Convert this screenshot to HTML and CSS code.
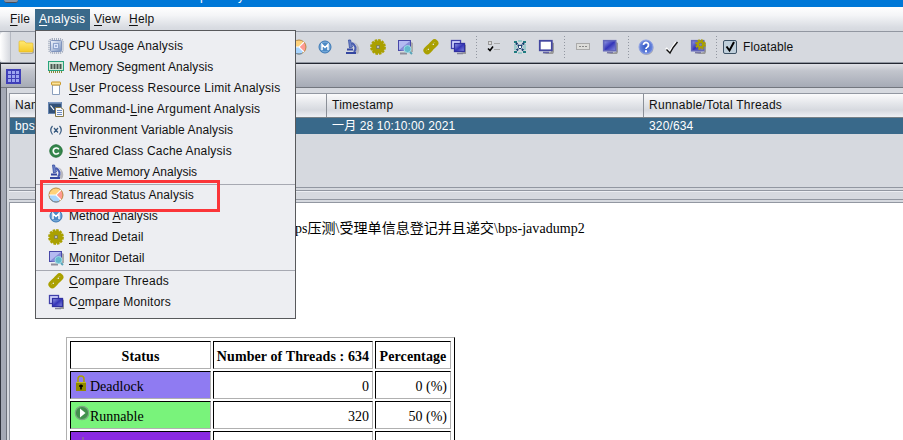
FILE: index.html
```html
<!DOCTYPE html>
<html lang="zh">
<head>
<meta charset="utf-8">
<title>Thread Analyzer</title>
<link rel="stylesheet" href="styles.css">
</head>
<body>
<svg class="defs" width="0" height="0">
  <defs>
    <linearGradient id="blue" x1="0" y1="0" x2="1" y2="1"><stop offset="0" stop-color="#9aa2e8"/><stop offset=".5" stop-color="#3434b8"/><stop offset="1" stop-color="#8a90e0"/></linearGradient>
    <linearGradient id="gold" x1="0" y1="0" x2="0" y2="1"><stop offset="0" stop-color="#ffe873"/><stop offset="1" stop-color="#f5ca28"/></linearGradient>
    <linearGradient id="chip" x1="0" y1="0" x2="1" y2="1"><stop offset="0" stop-color="#f4f7ff"/><stop offset="1" stop-color="#7791bd"/></linearGradient>
    <radialGradient id="ball"><stop offset="0" stop-color="#2d55c4"/><stop offset="1" stop-color="#708be0"/></radialGradient>
    <symbol id="folder" viewBox="0 0 16 16"><path d="M2 14h12l2-7v7l-2 1H3z" fill="#a8a8a8"/><path d="M1 3q0-1 1-1h4l2 2h6q1 0 1 1v7q0 1-1 1H2q-1 0-1-1z" fill="url(#gold)" stroke="#e3b71f" stroke-width=".6"/></symbol>
    <symbol id="cpu" viewBox="0 0 16 16"><rect x="1" y="1" width="14" height="14" rx="3" fill="none" stroke="#8d99ae" stroke-width="1.4" stroke-dasharray="1 1"/><rect x="2.500" y="2.500" width="11" height="11" rx="1" fill="url(#chip)" stroke="#8094bd"/><rect x="5.500" y="5.500" width="5" height="5" fill="#dce6fa" stroke="#8ea3cc"/><rect x="7" y="7" width="2" height="2" fill="#9fb0d6"/></symbol>
    <symbol id="ram" viewBox="0 0 16 16"><rect x=".5" y="2.500" width="15" height="9" fill="#d2e8d8" stroke="#27a47c"/><path d="M3.500 5v5M6.500 5v5M9.500 5v5M12.500 5v5" stroke="#4a5750" stroke-width="2"/><path d="M1 13h14" stroke="#898b3c" stroke-width="2" stroke-dasharray="1 1"/></symbol>
    <symbol id="jar" viewBox="0 0 16 16"><path d="M4.500 5h7v9.500h-7z" fill="#fff" stroke="#8b9fbd"/><rect x="3.500" y="2" width="9" height="3" rx=".6" fill="#fbe39a" stroke="#c89728"/></symbol>
    <symbol id="console" viewBox="0 0 16 16"><rect x=".5" y="1.500" width="13" height="11" fill="#315078" stroke="#6684b0"/><path d="M1 2h12" stroke="#94aed8"/><path d="M2.500 4.500 6 9M7 9h2" stroke="#fff" stroke-width="1.200"/><path d="M7.500 6.500h5l3 2v7h-8z" fill="#f8f9ff" stroke="#887b4b"/><path d="M9 9.500h5M9 11.500h5M9 13.500h5" stroke="#6e8dc0"/></symbol>
    <symbol id="variable" viewBox="0 0 16 16"><path d="M4.500 4Q1 8 4.500 12.500M11.500 4q3.500 4 0 8.500M6 6l4 4.500M10 6l-4 4.500" fill="none" stroke="#34577d" stroke-width="1.200"/></symbol>
    <symbol id="cache" viewBox="0 0 16 16"><circle cx="8" cy="8" r="6.200" fill="#35864c" stroke="#237139"/><path d="M10.800 6.400A3 3 0 1 0 10.800 9.600" fill="none" stroke="#fff" stroke-width="1.700"/></symbol>
    <symbol id="scope" viewBox="0 0 16 16"><path d="M10 3q6 6 0 11l4 1q3-5-1-10z" fill="#b8b8be"/><path d="M4.500 1h2l2 7-3 1z" fill="#6f83c8" stroke="#334ba0" stroke-width=".8"/><path d="M8 4q6 4 2 9" fill="none" stroke="#4a5cb0" stroke-width="2.200"/><path d="M3 10.500h6M2 14h10" stroke="#3547a0" stroke-width="1.800"/></symbol>
    <symbol id="pie" viewBox="0 0 16 16"><circle cx="8" cy="8" r="7" fill="#ffd27b"/><path d="M1 8h7l5 5A7 7 0 0 1 1 8" fill="#a8d5ff"/><path d="M8 8l5-5a7 7 0 0 1 0 10z" fill="#ff9a91"/><circle cx="8" cy="8" r="7" fill="none" stroke="#b88a45"/><path d="M1 8h7l5-5M8 8l5 5" stroke="#f9fcff" stroke-width="1.100" fill="none"/><path d="M2 11.500a7 7 0 0 0 9 3" stroke="#648fbd" fill="none"/></symbol>
    <symbol id="method" viewBox="0 0 16 16"><circle cx="8" cy="8" r="6" fill="#4c8ac5" stroke="#3b78b5"/><circle cx="8" cy="8" r="4.900" fill="none" stroke="#93bfe5" stroke-width=".7"/><path d="M5 11V5.500l3 3 3-3V11" fill="none" stroke="#fff" stroke-width="1.500"/></symbol>
    <symbol id="gear" viewBox="0 0 16 16"><circle cx="8" cy="8" r="6.900" fill="none" stroke="#aaa000" stroke-width="2" stroke-dasharray="2.600 1.012"/><circle cx="8" cy="8" r="6.600" fill="#aaa000"/><rect x="6" y="6" width="4" height="4" fill="#85864a"/><rect x="7" y="7" width="2" height="2" fill="#b8bbb8"/></symbol>
    <symbol id="smallgear" viewBox="0 0 12 12"><circle cx="6" cy="6" r="4.800" fill="none" stroke="#aaa000" stroke-width="2" stroke-dasharray="2.270 1.500"/><circle cx="6" cy="6" r="3" fill="none" stroke="#aaa000" stroke-width="2.600"/><circle cx="6" cy="6" r="1.500" fill="#8a8c9c"/></symbol>
    <symbol id="search" viewBox="0 0 16 16"><path d="M3 13h13V4l-2-1v10z" fill="#aaa"/><rect x="1.500" y="1.500" width="12" height="10" fill="#b4baf1" stroke="#4848a8"/><path d="M2 11l11-9v4l-6 6z" fill="#858bd8"/><path d="M3 14.500h7" stroke="#8e8e9a" stroke-width="2"/><circle cx="10.500" cy="10" r="3.500" fill="#64b9cc" stroke="#9adbe5"/><path d="m13 13 2 2" stroke="#57a4b8" stroke-width="2"/></symbol>
    <symbol id="link" viewBox="0 0 16 16"><g fill="none" stroke="#aaa000" stroke-width="3"><rect x="1.700" y="8" width="8" height="4.600" rx="2.200" transform="rotate(-45 5.500 10.500)"/><rect x="6.500" y="3" width="8" height="4.600" rx="2.200" transform="rotate(-45 10.500 5.500)"/></g><path d="m4 13 9-9" stroke="#aaa000" stroke-width="3"/><path d="m5 11 1-1M10 6l1-1" stroke="#e7e9d8"/></symbol>
    <symbol id="monitors" viewBox="0 0 16 16"><path d="M7 15h9V6l-2-1v8z" fill="#999"/><rect x="1.500" y="1.500" width="9" height="8" fill="#d6d9ff" stroke="#4141aa" stroke-width="1.300"/><rect x="4.500" y="4.500" width="10" height="8" fill="url(#blue)" stroke="#3030a0" stroke-width="1.300"/><path d="M7 14.500h6" stroke="#828299" stroke-width="1.500"/></symbol>
    <symbol id="checks" viewBox="0 0 16 16"><rect x="2.500" y="2.500" width="3" height="3" fill="#ddd" stroke="#999"/><path d="M8 4.500h6M8 10.500h6" stroke="#aaa" stroke-width="1.200"/><path d="m2 9.500 2 2 3-4" fill="none" stroke="#000" stroke-width="1.600"/></symbol>
    <symbol id="expand" viewBox="0 0 16 16"><path d="M2 2h3v2H2zM11 2h3v2h-3zM2 12h3v2H2zM11 12h3v2h-3z" fill="#207c80"/><path d="M6 2h4M2 8h3M11 8h3M6 14h4M2 6h2M12 6h2M2 10h2M12 10h2" stroke="#8ac5c5" stroke-width="1.500"/><path d="m4 4 8 8M12 4l-8 8" stroke="#173f70" stroke-width="2.200" stroke-dasharray="2 .8"/><path d="M7 7h2v2H7z" fill="#fff"/></symbol>
    <symbol id="screen" viewBox="0 0 16 16"><path d="M4 15h11l1-2V4l-3-1v10z" fill="#999"/><rect x="1.800" y="1.800" width="12" height="9.500" fill="#fff" stroke="#4347a0" stroke-width="1.800"/><path d="M5 13.500h6" stroke="#6262a6" stroke-width="1.500"/></symbol>
    <symbol id="dialog" viewBox="0 0 16 16"><rect x="1.500" y="4.500" width="13" height="6" fill="#ddddda" stroke="#aaa"/><path d="M4 7.500h8" stroke="#888" stroke-dasharray="2 1"/></symbol>
    <symbol id="monitor" viewBox="0 0 16 16"><path d="M4 15h11l1-2V4l-2-1v10z" fill="#999"/><rect x="1.700" y="1.700" width="12" height="10" fill="url(#blue)" stroke="#6367ba" stroke-width="1.600"/><path d="M5 13.500h6" stroke="#7777a7" stroke-width="1.500"/></symbol>
    <symbol id="help" viewBox="0 0 16 16"><circle cx="8.500" cy="9" r="7" fill="#aaa"/><circle cx="8" cy="8" r="7" fill="url(#ball)" stroke="#8da1e4"/><path d="M5.500 6a2.500 2.500 0 1 1 4 2Q8 8.700 8 10" fill="none" stroke="#fff" stroke-width="1.800"/><path d="M7 11.200h2v2H7z" fill="#fff"/></symbol>
    <symbol id="tick" viewBox="0 0 16 16"><path d="m2 9 3.500 4L12 3" fill="none" stroke="#fff" stroke-width="2.200"/><path d="m2.500 10.500 3.500 3.500Q9 8 13.500 3" fill="none" stroke="#111" stroke-width="1.400"/></symbol>
    <symbol id="lock" viewBox="0 0 16 16"><path d="M4 8V4q0-3 3-3t3 3v4" fill="none" stroke="#aaa000" stroke-width="1.500"/><path d="M2 7h10v9H2z" fill="#918a00"/><path d="M2 7.500h10" stroke="#c1b929"/><path d="M7 9.500v5M5 11h4" stroke="#000" stroke-width="1.600"/></symbol>
    <symbol id="play" viewBox="0 0 16 16"><circle cx="8" cy="8" r="6.700" fill="#42914d" stroke="#7aa881" stroke-width="1.200"/><path d="M6 3.500 11.500 8 6 12.500z" fill="#fff"/></symbol>
    <symbol id="spark" viewBox="0 0 16 16"><path d="M9 1v8M1 6h4v3M13 5 9 8" stroke="#8c8c72" fill="none"/></symbol>
  </defs>
</svg>

<div class="window">
  <div class="titlebar"><i class="app-icon"></i><span class="title-part first">p</span><span class="title-part">y</span></div>
  <nav class="menubar">
    <span class="menu menu-file"><u>F</u>ile</span><span class="menu menu-analysis"><u>A</u>nalysis</span><span class="menu menu-view"><u>V</u>iew</span><span class="menu menu-help"><u>H</u>elp</span>
  </nav>
  <div class="toolbar">
    <i class="grip"></i>
    <svg class="icon"><use href="#folder"/></svg>
    <div class="tools tools-analysis">
      <b><svg class="icon"><use href="#pie"/></svg></b><b><svg class="icon"><use href="#method"/></svg></b><b><svg class="icon"><use href="#scope"/></svg></b><b><svg class="icon"><use href="#gear"/></svg></b><b><svg class="icon"><use href="#search"/></svg></b><b><svg class="icon"><use href="#link"/></svg></b><b><svg class="icon"><use href="#monitors"/></svg></b>
    </div>
    <i class="dots"></i>
    <div class="tools"><b><svg class="icon"><use href="#checks"/></svg></b><b><svg class="icon"><use href="#expand"/></svg></b><b><svg class="icon"><use href="#screen"/></svg></b></div>
    <i class="dots"></i>
    <div class="tools tools-wide"><b><svg class="icon"><use href="#dialog"/></svg></b><b><svg class="icon"><use href="#monitor"/></svg></b></div>
    <i class="dots"></i>
    <div class="tools"><b><svg class="icon"><use href="#help"/></svg></b><b><svg class="icon"><use href="#tick"/></svg></b><b><svg class="icon" viewBox="0 0 16 16"><use href="#monitor"/><use href="#smallgear" x="5" y="0" width="11" height="11"/></svg></b></div>
    <i class="dots"></i>
    <svg class="checkbox" viewBox="0 0 14 14"><rect x=".5" y=".5" width="13" height="13" rx="1.500" fill="#bfcfdb" stroke="#3c5265"/><path d="m3.500 6.500 3 4L11 2" fill="none" stroke="#000" stroke-width="2"/></svg>
    <span class="floatable">Floatable</span>
  </div>

  <div class="frame">
    <div class="frame-title"><svg class="grid-icon" viewBox="0 0 15 15"><path d="M0 0h15v15H0z" fill="#3f3fb8"/><path d="M2 2h3v3H2zM6 2h3v3H6zM10 2h3v3h-3zM2 6h3v3H2zM6 6h3v3H6zM10 6h3v3h-3zM2 10h3v3H2zM6 10h3v3H6zM10 10h3v3h-3z" fill="#9ca4ef"/></svg></div>
    <div class="frame-body">
      <div class="dump-list">
        <div class="list-row list-head"><span>Nam</span><span>Timestamp</span><span>Runnable/Total Threads</span></div>
        <div class="list-row list-selected"><span>bps</span><span>一月 28 10:10:00 2021</span><span>320/634</span></div>
      </div>
      <div class="divider"></div>
      <main class="document">
        <p class="path">ps压测\受理单信息登记并且递交\bps-javadump2</p>
        <div class="status-table">
          <div class="cell head">Status</div><div class="cell head">Number of Threads : 634</div><div class="cell head">Percentage</div>
          <div class="cell deadlock"><svg class="icon"><use href="#lock"/></svg>Deadlock</div><div class="cell num">0</div><div class="cell num">0 (%)</div>
          <div class="cell runnable"><svg class="icon"><use href="#play"/></svg>Runnable</div><div class="cell num">320</div><div class="cell num">50 (%)</div>
          <div class="cell waiting"><svg class="icon"><use href="#spark"/></svg></div><div class="cell"></div><div class="cell"></div>
        </div>
      </main>
    </div>
  </div>
</div>

<div class="popup">
  <div class="item"><svg class="icon"><use href="#cpu"/></svg><span>CPU Usage Analysis</span></div>
  <div class="item tight"><svg class="icon"><use href="#ram"/></svg><span>Memo<u>r</u>y Segment Analysis</span></div>
  <div class="item loose"><svg class="icon"><use href="#jar"/></svg><span><u>U</u>ser Process Resource Limit Analysis</span></div>
  <div class="item loose"><svg class="icon"><use href="#console"/></svg><span>Command-<u>L</u>ine Argument Analysis</span></div>
  <div class="item tight"><svg class="icon"><use href="#variable"/></svg><span><u>E</u>nvironment Variable Analysis</span></div>
  <div class="item"><svg class="icon"><use href="#cache"/></svg><span><u>S</u>hared Class Cache Analysis</span></div>
  <div class="item tighter"><svg class="icon"><use href="#scope"/></svg><span><u>N</u>ative Memory Analysis</span></div>
  <div class="rule"></div>
  <div class="item tight"><svg class="icon"><use href="#pie"/></svg><span>T<u>h</u>read Status Analysis</span></div>
  <div class="item tight"><svg class="icon"><use href="#method"/></svg><span>Method <u>A</u>nalysis</span></div>
  <div class="item"><svg class="icon"><use href="#gear"/></svg><span><u>T</u>hread Detail</span></div>
  <div class="item tight"><svg class="icon"><use href="#search"/></svg><span><u>M</u>onitor Detail</span></div>
  <div class="rule"></div>
  <div class="item loose"><svg class="icon"><use href="#link"/></svg><span><u>C</u>ompare Threads</span></div>
  <div class="item"><svg class="icon"><use href="#monitors"/></svg><span>C<u>o</u>mpare Monitors</span></div>
  <div class="marker"></div>
</div>
</body>
</html>
```
FILE: styles.css
```css
* { box-sizing: border-box; }
body {
  margin: 0;
  width: 903px;
  height: 440px;
  overflow: hidden;
  font: 12px "Liberation Sans", "Noto Sans CJK SC", sans-serif;
  color: #111;
  background: #d6d9df;
}
.defs { position: absolute; }
.window { display: flex; flex-direction: column; height: 440px; overflow: hidden; }
.icon { width: 16px; height: 16px; flex: none; display: block; }
u { text-decoration: underline; text-underline-offset: 2px; text-decoration-thickness: 1px; text-decoration-skip-ink: none; }

.titlebar { display: flex; align-items: flex-start; height: 7px; flex: none; background: #0078d7; overflow: hidden; color: #fff; }
.app-icon { width: 14px; height: 3px; margin-left: 4px; background: #8d95a5; border-bottom: 1px solid #4c4f58; border-radius: 0 0 3px 3px; }
.title-part { width: 8px; height: 14px; line-height: 14px; margin: -11px 0 0 30px; }
.title-part.first { margin-left: 182px; }

.menubar { display: flex; height: 25px; flex: none; background: linear-gradient(#fff, #f4f5f7 35%, #d9dce2 85%, #d6d9df); border-bottom: 1px solid #9297a1; }
.menu { height: 23px; line-height: 22px; margin-top: 1px; letter-spacing: .2px; }
.menu-file { margin-left: 5px; width: 30px; padding-left: 5px; }
.menu-analysis { width: 55px; padding-left: 4px; margin-top: 2px; line-height: 20px; height: 22px; background: #39698a; color: #fff; }
.menu-view { width: 35px; padding-left: 4px; }
.menu-help { padding-left: 4px; }

.toolbar { display: flex; align-items: center; height: 30px; flex: none; }
.grip { width: 11px; height: 30px; margin-right: 7px; background: linear-gradient(90deg, #fff, #d6d9df); border-right: 1px solid #b5b9c2; border-radius: 4px 0 0 4px; }
.tools { display: flex; align-items: center; }
.tools b { width: 26px; display: flex; justify-content: center; }
.tools-analysis { margin-left: 251.500px; }
.tools-analysis b { width: 26.500px; }
.tools-wide b { width: 27px; }
.dots { width: 1px; height: 23px; margin: 0 4px 0 5px; background: repeating-linear-gradient(#9297a1 0 1px, transparent 1px 3px); }
.checkbox { width: 14px; height: 14px; margin-left: 2px; }
.floatable { margin-left: 6px; letter-spacing: .1px; }

.frame { flex: 1; display: flex; flex-direction: column; border-top: 1px solid #9297a1; border-left: 1px solid #30343e; }
.frame-title { height: 25px; flex: none; display: flex; align-items: center; padding: 1px 0 0 5px; border-top: 1px solid #242833; border-bottom: 1px solid #73777f; background: linear-gradient(#e0e1e6, #c2c5cd 30%, #a6abb6); }
.grid-icon { width: 15px; height: 15px; }
.frame-body { flex: 1; display: flex; flex-direction: column; padding: 5px 0 0 3px; border-left: 5px solid #a4a9b5; box-shadow: inset 1px 0 #6b707a; }
.dump-list { height: 95px; flex: none; border: solid #9297a1; border-width: 1px 0 1px 1px; }
.list-row { display: grid; grid-template-columns: 317px 317px 1fr; height: 16px; line-height: 16px; background: #39698a; color: #fff; white-space: nowrap; letter-spacing: .14px; }
.list-row span { padding-left: 5px; }
.list-head { height: 24px; line-height: 22px; color: #111; letter-spacing: .27px; background: linear-gradient(#fbfbfc, #e5e7eb 40%, #d6d9df 70%, #eef0f4); border-bottom: 1px solid #788187; }
.list-head span { border-right: 1px solid #8b9098; }
.list-head span:last-child { border-right: 0; }
.divider { height: 10px; flex: none; margin: 2px 0; border: solid #9297a1; border-width: 1px 0; box-shadow: inset 0 1px #eceef2; }
.document { flex: 1; background: #fff; border-top: 1px solid #9297a1; border-left: 1px solid #9297a1; font: 14px "Liberation Serif", "Noto Sans CJK SC", serif; color: #000; }
.path { margin: 16px 0 0 285px; line-height: 20px; height: 20px; white-space: nowrap; letter-spacing: .04px; }
.status-table { display: grid; grid-template-columns: 141px 160px 76px; grid-auto-rows: 28px; gap: 2px; width: 389px; margin: 98px 0 0 56px; padding: 3px; border: solid; border-width: 1px; border-color: #b0b0b0 #000 #000 #b0b0b0; }
.cell { display: flex; align-items: center; padding: 3px 3px 0; border: solid 1px; border-color: #000 #b0b0b0 #b0b0b0 #000; }
.cell .icon { margin-top: -7px; }
.head { font-weight: bold; justify-content: center; white-space: nowrap; letter-spacing: .1px; }
.num { justify-content: flex-end; }
.deadlock { background: #8f7bf2; }
.runnable { background: #79f37b; }
.waiting { background: #8a2be2; align-items: flex-start; }
.waiting .icon { margin-top: 1px; }

.popup { position: absolute; left: 35px; top: 30px; width: 261px; height: 289px; padding-top: 4px; border: 1px solid #58595c; background: #edeef2; }
.item { display: flex; align-items: center; height: 21px; padding-left: 12px; gap: 5px; white-space: nowrap; letter-spacing: .2px; }
.item.loose { letter-spacing: .24px; }
.item.tight { letter-spacing: .1px; }
.item.tighter { letter-spacing: 0; }
.rule { height: 1px; margin: 2px 0 -1px; background: #a7a9b2; }
.marker { position: absolute; left: 4px; top: 149px; width: 180px; height: 32px; border: 3px solid #fb3539; }
```
